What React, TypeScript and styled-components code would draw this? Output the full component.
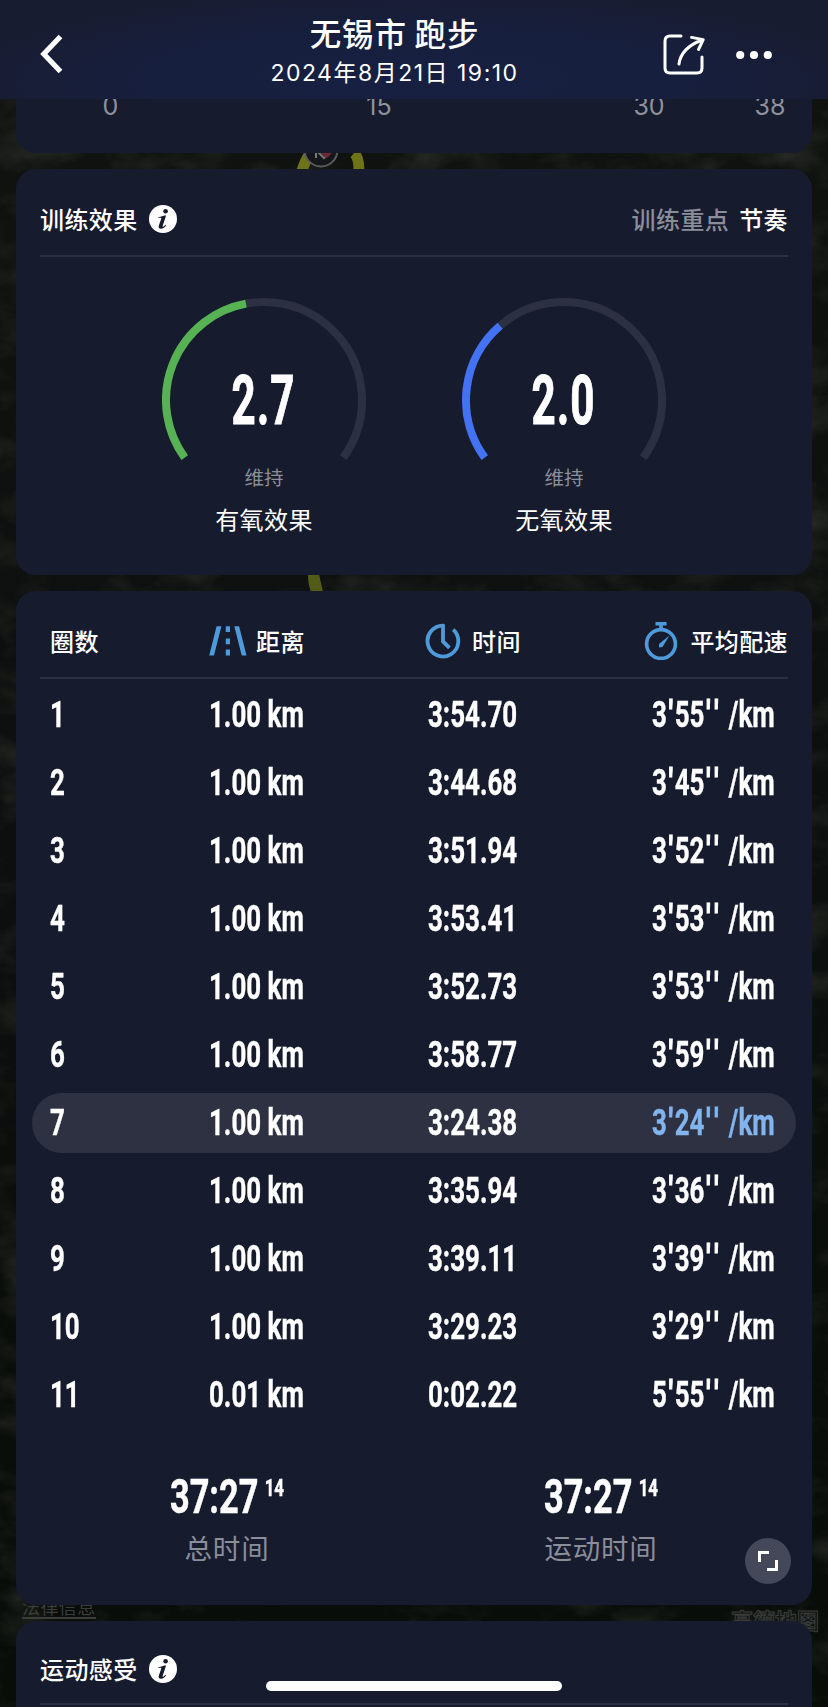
import React from "react";
import styled, { createGlobalStyle } from "styled-components";

const cjk = `"Noto Sans CJK SC", sans-serif`;

const GlobalStyle = createGlobalStyle`
  * { box-sizing: border-box; }
  body { margin: 0; background: #0b0f0e; }
`;

const Screen = styled.div`
  position: relative;
  width: 828px;
  height: 1707px;
  overflow: hidden;
  display: flex;
  flex-direction: column;
  color: #fff;
  font-family: Inter, ${cjk};
`;

const MapBackdrop = styled.svg`
  position: absolute;
  inset: 0;
`;

const LegalLink = styled.span`
  position: absolute;
  left: 22px;
  top: 1596px;
  font: 400 18px/21px ${cjk};
  letter-spacing: 0.4px;
  color: #3b3d3c;
  border-bottom: 2px solid #3b3d3c;
`;

const MapBrand = styled.span`
  position: absolute;
  left: 731px;
  top: 1606px;
  font: 700 22px/26px ${cjk};
  color: #121614;
  -webkit-text-stroke: 1px #3a3c3b;
`;

const Header = styled.header`
  position: relative;
  z-index: 1;
  flex: none;
  height: 99px;
  padding: 0 56px 0 40px;
  display: grid;
  grid-template-columns: 107px 1fr 125px;
  align-items: center;
  background: radial-gradient(ellipse 58% 95% at 50% 82%, #172041 0%, #171f3e 55%, #181c30 100%);
`;

const HeaderIcon = styled.svg`
  display: block;
`;

const HeaderActions = styled.div`
  display: flex;
  align-items: center;
  justify-content: flex-end;
  gap: 31px;
  padding-top: 10px;
`;

const BackButton = styled.div`
  padding-top: 9px;
`;

const HeaderText = styled.div`
  padding: 3px 5px 0 0;
  text-align: center;
  white-space: nowrap;
`;

const Title = styled.h1`
  margin: 0;
  font: 500 31.5px/40px ${cjk};
  letter-spacing: 0.8px;
`;

const DateLine = styled.div`
  margin-top: 3px;
  font: 400 23px/36px Inter, ${cjk};
  letter-spacing: 1.5px;
`;

const Content = styled.main`
  position: relative;
  flex: 1;
  min-height: 0;
  padding: 0 16px;
  display: flex;
  flex-direction: column;
  gap: 16px;
`;

const Card = styled.section<{ $height: number }>`
  position: relative;
  flex: none;
  height: ${(p) => p.$height}px;
  padding: 0 24px;
  border-radius: 20px;
  background: #171b2e;
`;

const AxisCard = styled(Card)`
  border-radius: 0 0 20px 20px;
  overflow: hidden;
`;

const AxisLabels = styled.div`
  margin-top: -9px;
  display: grid;
  grid-template-columns: 141px 396px 144px 98px;
  text-align: center;
  font: 400 25px/32px Inter, sans-serif;
  color: #8f919c;
`;

const CardHeader = styled.div<{ $height: number }>`
  height: ${(p) => p.$height}px;
  display: flex;
  align-items: center;
  border-bottom: 2px solid #2c3042;
  padding-top: 14px;
`;

const Label = styled.span<{ $muted?: boolean }>`
  font: 500 24px/36px ${cjk};
  letter-spacing: 0.4px;
  white-space: nowrap;
  color: ${(p) => (p.$muted ? "#8b8d99" : "#fff")};
`;

const Focus = styled.div`
  margin-left: auto;
  display: flex;
  gap: 10px;
`;

const InfoSvg = styled.svg`
  margin-left: 11px;
`;

const Gauges = styled.div`
  display: flex;
  justify-content: center;
  gap: 96px;
  padding-top: 41px;
`;

const Gauge = styled.div`
  width: 204px;
  display: flex;
  flex-direction: column;
  align-items: center;
`;

const Dial = styled.div`
  display: grid;
  height: 161px;
  > * { grid-area: 1 / 1; }
`;

const DialValue = styled.div`
  align-self: start;
  justify-self: center;
  margin-top: 58px;
  font: 700 69px/90px Roboto, sans-serif;
  letter-spacing: 2px;
  -webkit-text-stroke: 1px currentColor;
  transform: scaleX(0.61);
`;

const GaugeLevel = styled.div`
  font: 400 19.5px/36px ${cjk};
  color: #8b8d99;
`;

const GaugeName = styled.div`
  margin-top: 6px;
  font: 400 24px/36px ${cjk};
  letter-spacing: 0.4px;
`;

const columns = "158px 217px 218px 1fr";

const LapHeader = styled.div`
  height: 88px;
  padding-left: 10px;
  display: grid;
  grid-template-columns: ${columns};
  align-items: center;
  border-bottom: 2px solid #2c3042;
`;

const HeadCell = styled.div<{ $gap?: number; $end?: boolean }>`
  padding-top: 14px;
  display: flex;
  align-items: center;
  gap: ${(p) => p.$gap ?? 0}px;
  justify-content: ${(p) => (p.$end ? "flex-end" : "flex-start")};
`;

const LapList = styled.div`
  margin: 6px -8px 0;
  display: flex;
  flex-direction: column;
  gap: 8px;
`;

const LapRow = styled.div<{ $active: boolean }>`
  height: 60px;
  padding: 0 22px 0 18px;
  border-radius: 30px;
  display: grid;
  grid-template-columns: ${columns};
  align-items: center;
  background: ${(p) => (p.$active ? "#2e3142" : "transparent")};
`;

const Num = styled.span<{ $indent?: number }>`
  display: block;
  margin-left: ${(p) => p.$indent ?? 0}px;
  font: 700 36.5px/56px Roboto, sans-serif;
  -webkit-text-stroke: 0.4px currentColor;
  white-space: pre;
  justify-self: start;
  transform: scaleX(0.71);
  transform-origin: left center;
`;

const PaceNum = styled(Num)<{ $blue: boolean }>`
  word-spacing: 3px;
  color: ${(p) => (p.$blue ? "#82b4ee" : "#fff")};
`;

const Tick = styled.span`
  padding: 0 2.6px;
  -webkit-text-stroke: 1.2px currentColor;
`;

const Totals = styled.div`
  margin-top: 40px;
  display: grid;
  grid-template-columns: 1fr 1fr;
  text-align: center;
`;

const TotalTime = styled.div`
  font: 700 49px/64px Roboto, sans-serif;
  -webkit-text-stroke: 0.5px currentColor;
  transform: scaleX(0.7);
  white-space: nowrap;
`;

const Hundredths = styled.span`
  margin-left: 9px;
  font-size: 24px;
  font-weight: 700;
  position: relative;
  top: -17px;
`;

const TotalLabel = styled.div`
  margin-top: -10px;
  font: 400 27.5px/40px ${cjk};
  letter-spacing: 0.8px;
  color: #8b8d99;
`;

const ExpandButton = styled.div`
  position: absolute;
  right: 21px;
  bottom: 21px;
  width: 46px;
  height: 46px;
  border-radius: 50%;
  background: #454858;
  display: grid;
  place-items: center;
`;

const HomeIndicator = styled.div`
  position: absolute;
  z-index: 2;
  left: 266px;
  top: 1681px;
  width: 296px;
  height: 10px;
  border-radius: 5px;
  background: #fff;
`;

const laps = [
  ["1", "1.00 km", "3:54.70", "3'55'' /km"],
  ["2", "1.00 km", "3:44.68", "3'45'' /km"],
  ["3", "1.00 km", "3:51.94", "3'52'' /km"],
  ["4", "1.00 km", "3:53.41", "3'53'' /km"],
  ["5", "1.00 km", "3:52.73", "3'53'' /km"],
  ["6", "1.00 km", "3:58.77", "3'59'' /km"],
  ["7", "1.00 km", "3:24.38", "3'24'' /km"],
  ["8", "1.00 km", "3:35.94", "3'36'' /km"],
  ["9", "1.00 km", "3:39.11", "3'39'' /km"],
  ["10", "1.00 km", "3:29.23", "3'29'' /km"],
  ["11", "0.01 km", "0:02.22", "5'55'' /km"],
];
const fastestLap = "7";

const point = (deg: number) => {
  const a = (deg * Math.PI) / 180;
  return `${102 + 98 * Math.sin(a)} ${102 - 98 * Math.cos(a)}`;
};
const arc = (from: number, to: number) =>
  `M${point(from)} A98 98 0 ${to - from > 180 ? 1 : 0} 1 ${point(to)}`;

function EffectGauge(props: { value: string; end: number; color: string; name: string }) {
  return (
    <Gauge>
      <Dial>
        <svg width="204" height="164" viewBox="0 0 204 164" fill="none" strokeWidth="8">
          <path d={arc(-126, 126)} stroke="#2c3042" />
          <path d={arc(-126, props.end)} stroke={props.color} />
        </svg>
        <DialValue>{props.value}</DialValue>
      </Dial>
      <GaugeLevel>维持</GaugeLevel>
      <GaugeName>{props.name}</GaugeName>
    </Gauge>
  );
}

const InfoIcon = () => (
  <InfoSvg width="28" height="28" viewBox="0 0 28 28">
    <circle cx="14" cy="14" r="14" fill="#fff" />
    <circle cx="16.6" cy="6.2" r="2.3" fill="#171b2e" />
    <path
      d="M9.2 12.2c2.2-.4 4.2-.9 6.3-1.8h1.6l-3.4 10.4c-.2.8 0 1.1.4 1 .8-.2 1.5-1.2 2.2-2.1l.8.5c-1.3 2.1-2.9 3.5-5.2 3.5-1.8 0-2.6-1.1-2.1-2.9l2.4-7.1c.2-.7-.2-.9-.9-.9H9z"
      fill="#171b2e"
    />
  </InfoSvg>
);

const RoadIcon = () => (
  <svg width="39" height="30" viewBox="0 0 39 30" fill="#4e9bdb">
    <path d="M8.6 .3h4.8L6 29.5H1.2zM26.3 .3h4.8l7.4 29.2h-4.8z" />
    <path d="M17.8 .3h4.2v5.7h-4.2zM17.8 12.5h4.2v5.8h-4.2zM17.8 23.6h4.2v5.9h-4.2z" />
  </svg>
);

const ClockIcon = () => (
  <svg width="36" height="36" viewBox="0 0 36 36" fill="none" stroke="#4e9bdb" strokeWidth="3.8">
    <path d="M19 2.7A15.4 15.4 0 1 0 28.2 6.6" />
    <path d="M18 1.2V18.4l6.4 6.4" />
  </svg>
);

const StopwatchIcon = () => (
  <svg width="34" height="38" viewBox="0 0 34 38" fill="none" stroke="#4e9bdb" strokeWidth="3.6">
    <circle cx="17" cy="22" r="14.4" />
    <path d="M11.5 1.8h11M17 1.8v6" strokeWidth="3.6" />
    <path d="M25.5 13.5 18.5 25 15 25.6 15 22z" fill="#4e9bdb" stroke="none" />
  </svg>
);

const MapArt = () => (
  <MapBackdrop width="828" height="1707" viewBox="0 0 828 1707">
    <defs>
      <filter id="terrain" x="0" y="0" width="100%" height="100%">
        <feTurbulence type="fractalNoise" baseFrequency="0.018 0.03" numOctaves="4" seed="8" />
        <feColorMatrix values="0 0 0 0 0.2  0 0 0 0 0.2  0 0 0 0 0.17  1 1 0 0 -0.9" />
      </filter>
      <linearGradient id="ground" x1="0" y1="0" x2="0" y2="1">
        <stop offset="0" stopColor="#10130f" />
        <stop offset="0.5" stopColor="#0c0f0e" />
        <stop offset="1" stopColor="#080d08" />
      </linearGradient>
    </defs>
    <rect width="828" height="1707" fill="url(#ground)" />
    <rect width="828" height="1707" filter="url(#terrain)" opacity="0.3" />
    <path d="M302 171Q308 150 322 144M354 153q5 4 5 18" stroke="#6d7417" strokeWidth="11" fill="none" />
    <path d="M308 574h11l4 18h-12q-3-8-3-18z" fill="#525b17" />
    <circle cx="321" cy="150" r="16.5" fill="#15161c" stroke="#5a5c5e" strokeWidth="2" />
    <path d="M316 158v-8l8 8 7-7" stroke="#77797b" strokeWidth="2" fill="none" />
    <path d="M321 152h12l-6 6q-5-1-6-6z" fill="#6d2a32" />
  </MapBackdrop>
);

function Pace({ value, fastest }: { value: string; fastest: boolean }) {
  return (
    <PaceNum $indent={9} $blue={fastest}>
      {value.split("").map((c, i) => (c === "'" ? <Tick key={i}>{c}</Tick> : c))}
    </PaceNum>
  );
}

function Total({ label }: { label: string }) {
  return (
    <div>
      <TotalTime>
        37:27<Hundredths>14</Hundredths>
      </TotalTime>
      <TotalLabel>{label}</TotalLabel>
    </div>
  );
}

export default function App() {
  return (
    <Screen>
      <GlobalStyle />
      <MapArt />
      <LegalLink>法律信息</LegalLink>
      <MapBrand>高德地图</MapBrand>
      <Header>
        <BackButton>
          <HeaderIcon width="24" height="40" viewBox="0 0 24 40" fill="none" stroke="#fff" strokeWidth="5.2">
            <path d="M20.5 2.5 3.8 20 20.5 37.5" />
          </HeaderIcon>
        </BackButton>
        <HeaderText>
          <Title>无锡市 跑步</Title>
          <DateLine>2024年8月21日 19:10</DateLine>
        </HeaderText>
        <HeaderActions>
          <HeaderIcon width="42" height="42" viewBox="0 0 42 42" fill="none" stroke="#fff" strokeWidth="3">
            <path d="M18 2H7Q2 2 2 7V34Q2 39 7 39H34Q39 39 39 34V23" strokeLinecap="round" />
            <path d="M16 30Q18 14 39 6M28.5 3.4 40.2 5.6 35.5 15.5" strokeLinecap="round" strokeLinejoin="round" />
          </HeaderIcon>
          <HeaderIcon width="36" height="10" viewBox="0 0 36 10" fill="#fff">
            <circle cx="4.2" cy="5" r="4.1" />
            <circle cx="18" cy="5" r="4.1" />
            <circle cx="31.8" cy="5" r="4.1" />
          </HeaderIcon>
        </HeaderActions>
      </Header>
      <Content>
        <AxisCard $height={54}>
          <AxisLabels>
            <span>0</span>
            <span>15</span>
            <span>30</span>
            <span>38</span>
          </AxisLabels>
        </AxisCard>

        <Card $height={406}>
          <CardHeader $height={88}>
            <Label>训练效果</Label>
            <InfoIcon />
            <Focus>
              <Label $muted>训练重点</Label>
              <Label>节奏</Label>
            </Focus>
          </CardHeader>
          <Gauges>
            <EffectGauge value="2.7" end={-10.6} color="#57b254" name="有氧效果" />
            <EffectGauge value="2.0" end={-40.7} color="#4472f4" name="无氧效果" />
          </Gauges>
        </Card>

        <Card $height={1014}>
          <LapHeader>
            <HeadCell>
              <Label>圈数</Label>
            </HeadCell>
            <HeadCell $gap={9}>
              <RoadIcon />
              <Label>距离</Label>
            </HeadCell>
            <HeadCell $gap={11}>
              <ClockIcon />
              <Label>时间</Label>
            </HeadCell>
            <HeadCell $gap={12} $end>
              <StopwatchIcon />
              <Label>平均配速</Label>
            </HeadCell>
          </LapHeader>
          <LapList>
            {laps.map(([lap, distance, time, pace]) => (
              <LapRow key={lap} $active={lap === fastestLap}>
                <Num>{lap}</Num>
                <Num $indent={1}>{distance}</Num>
                <Num $indent={3}>{time}</Num>
                <Pace value={pace} fastest={lap === fastestLap} />
              </LapRow>
            ))}
          </LapList>
          <Totals>
            <Total label="总时间" />
            <Total label="运动时间" />
          </Totals>
          <ExpandButton>
            <svg width="22" height="22" viewBox="0 0 22 22" fill="none" stroke="#fff" strokeWidth="3">
              <path d="M12 2.5H2.5V12M10 19.5h9.5V10" />
            </svg>
          </ExpandButton>
        </Card>

        <Card $height={140}>
          <CardHeader $height={84}>
            <Label>运动感受</Label>
            <InfoIcon />
          </CardHeader>
        </Card>
      </Content>
      <HomeIndicator />
    </Screen>
  );
}
